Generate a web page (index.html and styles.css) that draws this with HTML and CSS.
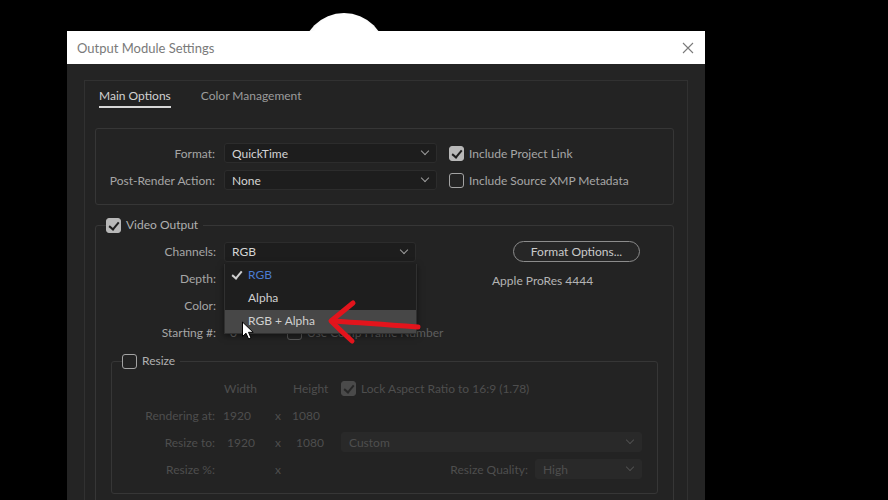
FILE: index.html
```html
<!DOCTYPE html>
<html>
  <head>
    <meta charset="utf-8" />
    <title>Output Module Settings</title>
    <link rel="stylesheet" href="styles.css">
  </head>

  <body>
    <div class="ball"></div>

    <div class="dialog">
      <div class="titlebar">
        <span>Output Module Settings</span>
        <svg class="close" width="12" height="12" viewBox="0 0 12 12">
          <path d="M1 1 L11 11 M11 1 L1 11" stroke="#7a7a7a" stroke-width="1.1" fill="none" />
        </svg>
      </div>

      <div class="dialog-body">
        <div class="panel">
          <div class="tabs">
            <span class="tab active">Main Options</span>
            <span class="tab">Color Management</span>
          </div>

          <div class="group format-group">
            <label class="label">Format:</label>
            <div class="select"><span>QuickTime</span><i class="chevron"></i></div>
            <div class="check-line"><span class="checkbox checked"></span>Include Project Link</div>

            <label class="label">Post-Render Action:</label>
            <div class="select"><span>None</span><i class="chevron"></i></div>
            <div class="check-line"><span class="checkbox"></span>Include Source XMP Metadata</div>
          </div>

          <fieldset class="box video-box">
            <legend><span class="checkbox checked"></span>Video Output</legend>

            <div class="video-top">
              <div class="video-grid">
                <label class="label">Channels:</label>
                <div class="select channel-select">
                  <span>RGB</span><i class="chevron"></i>
                  <ul class="menu">
                    <li class="selected">RGB</li>
                    <li>Alpha</li>
                    <li class="hover">RGB + Alpha</li>
                  </ul>
                </div>

                <label class="label">Depth:</label>
                <div class="select"><i class="chevron"></i></div>

                <label class="label">Color:</label>
                <div class="select"><i class="chevron"></i></div>

                <label class="label">Starting #:</label>
                <div class="start-line">
                  <span class="start-value">0</span>
                  <div class="check-line dim"><span class="checkbox"></span>Use Comp Frame Number</div>
                </div>
              </div>

              <div class="codec">
                <button class="pill">Format Options...</button>
                <p>Apple ProRes 4444</p>
              </div>
            </div>

            <fieldset class="box resize-box">
              <legend><span class="checkbox"></span>Resize</legend>

              <div class="resize-grid">
                <span></span>
                <span class="head">Width</span>
                <span></span>
                <span class="head">Height</span>
                <div class="check-line off"><span class="checkbox checked"></span>Lock Aspect Ratio to 16:9 (1.78)</div>

                <label class="label">Rendering at:</label>
                <span class="num">1920</span>
                <span class="times">x</span>
                <span class="num">1080</span>
                <span></span>

                <label class="label">Resize to:</label>
                <span class="num field">1920</span>
                <span class="times">x</span>
                <span class="num field">1080</span>
                <div class="select off"><span>Custom</span><i class="chevron"></i></div>

                <label class="label">Resize %:</label>
                <span></span>
                <span class="times">x</span>
                <span></span>
                <div class="quality">
                  <label class="label">Resize Quality:</label>
                  <div class="select off quality-select"><span>High</span><i class="chevron"></i></div>
                </div>
              </div>
            </fieldset>
          </fieldset>
        </div>
      </div>
    </div>

    <svg class="pointer" width="14" height="20" viewBox="0 0 14 20">
      <path d="M1.5 1 L1.5 15.5 L5 12.2 L7.6 18 L10 17 L7.5 11.3 L12.2 11.3 Z" fill="#fff" stroke="#000" stroke-width="1" stroke-linejoin="round" />
    </svg>

    <svg class="scribble" width="100" height="50" viewBox="0 0 100 50">
      <path d="M27 4 Q16 13 5 22 Q15 32 26 42" fill="none" stroke="#e3141c" stroke-width="5" stroke-linecap="round" stroke-linejoin="round" />
      <path d="M6 22 Q40 24 92 28" fill="none" stroke="#e3141c" stroke-width="5" stroke-linecap="round" />
    </svg>
  </body>
</html>
```

FILE: styles.css
```css
* {
  margin: 0;
  padding: 0;
  box-sizing: border-box;
}
body {
  position: relative;
  width: 888px;
  height: 500px;
  overflow: hidden;
  background: #000;
  font-family: Lato, "Liberation Sans", sans-serif;
  font-size: 12px;
  color: #a6a6a6;
}
.ball {
  position: absolute;
  left: 302px;
  top: 13px;
  width: 84px;
  height: 84px;
  border-radius: 50%;
  background: radial-gradient(circle at 50% 40%, #fff 50%, #e2e2e2 75%, #a5a5a5 100%);
}
.dialog {
  position: relative;
  width: 638px;
  margin: 31px 0 0 67px;
}
.titlebar {
  height: 33px;
  background: #fff;
  display: flex;
  align-items: center;
  justify-content: space-between;
  padding: 0 11px 0 10px;
  color: #7a7a7a;
  font-size: 13px;
}
.dialog-body {
  height: 436px;
  overflow: hidden;
  background: #242424;
  padding: 16px 17px 0 17px;
}
.panel {
  height: 460px;
  border: 1px solid #313131;
  background: #232323;
  padding: 0 13px 0 10px;
}
.tabs {
  display: flex;
  gap: 30px;
  padding: 7px 0 0 4px;
}
.tab {
  line-height: 16px;
  padding-bottom: 2px;
  border-bottom: 2px solid transparent;
  color: #9c9c9c;
}
.tab.active {
  color: #d2d2d2;
  border-bottom-color: #d8d8d8;
}

.label {
  text-align: right;
  white-space: nowrap;
}

.group {
  margin-top: 20px;
  border: 1px solid #363636;
  border-radius: 3px;
}
.format-group {
  display: grid;
  grid-template-columns: 119px 213px 1fr;
  grid-auto-rows: 20px;
  column-gap: 9px;
  row-gap: 7px;
  align-items: center;
  padding: 14px 0;
}
.format-group .check-line {
  margin-left: 3px;
}

.select {
  position: relative;
  height: 20px;
  display: flex;
  align-items: center;
  justify-content: space-between;
  padding: 0 8px 0 7px;
  background: #1d1d1d;
  border: 1px solid #2c2c2c;
  border-radius: 3px;
  color: #d4d4d4;
}
.select .chevron {
  margin-left: auto;
}
.chevron {
  width: 6px;
  height: 6px;
  border-right: 1.3px solid #9c9c9c;
  border-bottom: 1.3px solid #9c9c9c;
  transform: rotate(45deg);
  margin-top: -4px;
}

.check-line {
  display: flex;
  align-items: center;
  gap: 5px;
  white-space: nowrap;
}
.checkbox {
  position: relative;
  display: inline-block;
  width: 15px;
  height: 15px;
  border: 1.5px solid #a3a3a3;
  border-radius: 3px;
  flex-shrink: 0;
}
.checkbox.checked {
  background: #b8b8b8;
  border-color: #b8b8b8;
}
.checkbox.checked::after {
  content: "";
  position: absolute;
  left: 4px;
  top: 1px;
  width: 4px;
  height: 8px;
  border-right: 2px solid #1e1e1e;
  border-bottom: 2px solid #1e1e1e;
  transform: rotate(40deg);
}

.box {
  border: 1px solid #363636;
  border-radius: 3px;
  min-width: 0;
}
.box legend {
  display: flex;
  align-items: center;
  gap: 5px;
  height: 16px;
  line-height: 16px;
  padding-right: 5px;
  color: #b0b0b0;
}
.video-box {
  margin-top: 12px;
  height: 400px;
  padding-top: 8px;
}
.video-box > legend {
  margin-left: 10px;
}
.video-top {
  display: flex;
}
.video-grid {
  display: grid;
  grid-template-columns: 120px 192px;
  grid-auto-rows: 21px;
  column-gap: 8px;
  row-gap: 6px;
  align-items: center;
}
.channel-select {
  z-index: 2;
}
.menu {
  position: absolute;
  left: -1px;
  top: 21px;
  width: 193px;
  list-style: none;
  background: #1e1e1e;
  border: 1px solid #303030;
  border-top: 0;
  box-shadow: 0 2px 6px rgba(0, 0, 0, 0.5);
}
.menu li {
  position: relative;
  height: 23px;
  line-height: 22px;
  padding-left: 23px;
  color: #d0d0d0;
}
.menu li.selected {
  color: #4a7bd0;
}
.menu li.selected::before {
  content: "";
  position: absolute;
  left: 9px;
  top: 5px;
  width: 4px;
  height: 8px;
  border-right: 2px solid #cfcfcf;
  border-bottom: 2px solid #cfcfcf;
  transform: rotate(40deg);
}
.menu li.hover {
  background: #474747;
}
.start-line {
  display: flex;
  align-items: center;
  gap: 12px;
}
.start-value {
  flex-shrink: 0;
  width: 51px;
  padding-left: 6px;
  color: #6a6a6a;
}
.check-line.dim {
  flex-shrink: 0;
  color: #5e5e5e;
}
.check-line.dim .checkbox {
  border-color: #5a5a5a;
}

.codec {
  margin-left: 76px;
}
.pill {
  display: block;
  margin-left: 21px;
  width: 127px;
  height: 21px;
  border: 1.5px solid #8c8c8c;
  border-radius: 11px;
  background: #262626;
  color: #cacaca;
  font-family: inherit;
  font-size: 12px;
}
.codec p {
  margin-top: 11px;
  line-height: 16px;
  color: #b4b4b4;
}

.resize-box {
  margin: 10px 15px 0 15px;
  padding: 9px 15px 14px 0;
}
.resize-box > legend {
  margin-left: 10px;
}
.resize-grid {
  display: grid;
  grid-template-columns: 103px 44px 9px 41px 1fr;
  grid-auto-rows: 20px;
  column-gap: 8px;
  row-gap: 7px;
  align-items: center;
  color: #4e4e4e;
}
.head {
  padding-left: 1px;
}
.num.field {
  padding-left: 4px;
}
.check-line.off .checkbox.checked {
  background: #4a4a4a;
  border-color: #4a4a4a;
}
.check-line.off .checkbox.checked::after {
  border-color: #272727;
}
.select.off {
  background: #292929;
  border-color: #292929;
  color: #4e4e4e;
}
.select.off .chevron {
  border-color: #4e4e4e;
}
.quality {
  display: flex;
  justify-content: flex-end;
  align-items: center;
  gap: 7px;
}
.quality-select {
  width: 107px;
}

.pointer {
  position: absolute;
  z-index: 5;
  left: 241px;
  top: 321px;
}
.scribble {
  position: absolute;
  z-index: 5;
  left: 326px;
  top: 299px;
}
```
